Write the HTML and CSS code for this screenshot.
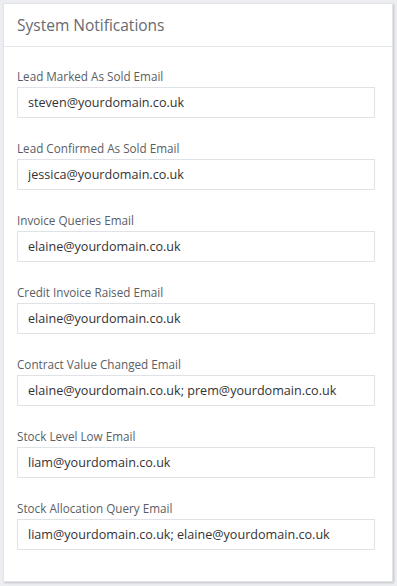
FILE: index.html
```html
<!DOCTYPE html>
<html lang="en">

<head>
    <meta charset="UTF-8">
    <meta name="viewport" content="width=device-width, initial-scale=1.0">
    <title>System Notifications</title>
    <link rel="stylesheet" href="styles.css">
</head>

<body>
    <div class="panel">
        <div class="panel-heading">
            <h3>System Notifications</h3>
        </div>
        <div class="panel-body">
            <div class="field">
                <label for="sold">Lead Marked As Sold Email</label>
                <input type="text" id="sold" value="steven@yourdomain.co.uk">
            </div>
            <div class="field">
                <label for="confirmed">Lead Confirmed As Sold Email</label>
                <input type="text" id="confirmed" value="jessica@yourdomain.co.uk">
            </div>
            <div class="field">
                <label for="queries">Invoice Queries Email</label>
                <input type="text" id="queries" value="elaine@yourdomain.co.uk">
            </div>
            <div class="field">
                <label for="credit">Credit Invoice Raised Email</label>
                <input type="text" id="credit" value="elaine@yourdomain.co.uk">
            </div>
            <div class="field">
                <label for="contract">Contract Value Changed Email</label>
                <input type="text" id="contract" value="elaine@yourdomain.co.uk; prem@yourdomain.co.uk">
            </div>
            <div class="field">
                <label for="stock">Stock Level Low Email</label>
                <input type="text" id="stock" value="liam@yourdomain.co.uk">
            </div>
            <div class="field">
                <label for="allocation">Stock Allocation Query Email</label>
                <input type="text" id="allocation" value="liam@yourdomain.co.uk; elaine@yourdomain.co.uk">
            </div>
        </div>
    </div>
</body>

</html>
```

FILE: styles.css
```css
* {
    box-sizing: border-box;
    font-family: "Open Sans", "Helvetica Neue", sans-serif;
}

body {
    margin: 0;
    padding: 3px 4px 4px 3px;
    background-color: #eceef1;
}

.panel {
    background-color: #ffffff;
    border: 1px solid #e2e4e9;
    box-shadow: 1px 1px 2px rgba(0, 0, 0, 0.18);
}

.panel-heading {
    height: 43px;
    padding: 0 13px;
    border-bottom: 1px solid #e4e6ea;
    display: flex;
    align-items: center;
}

.panel-heading h3 {
    margin: 0;
    font-size: 15.5px;
    font-weight: 400;
    color: #666a70;
}

.panel-body {
    padding: 21px 17px 9px 13px;
}

.field {
    display: flex;
    flex-direction: column;
    gap: 2px;
    margin-bottom: 22px;
}

.field label {
    font-size: 11.7px;
    line-height: 17px;
    color: #5a5e64;
}

.field input {
    height: 31px;
    padding: 0 10px;
    border: 1px solid #e0e2e8;
    border-radius: 0;
    font-size: 12.6px;
    color: #333333;
    outline: none;
}
```
